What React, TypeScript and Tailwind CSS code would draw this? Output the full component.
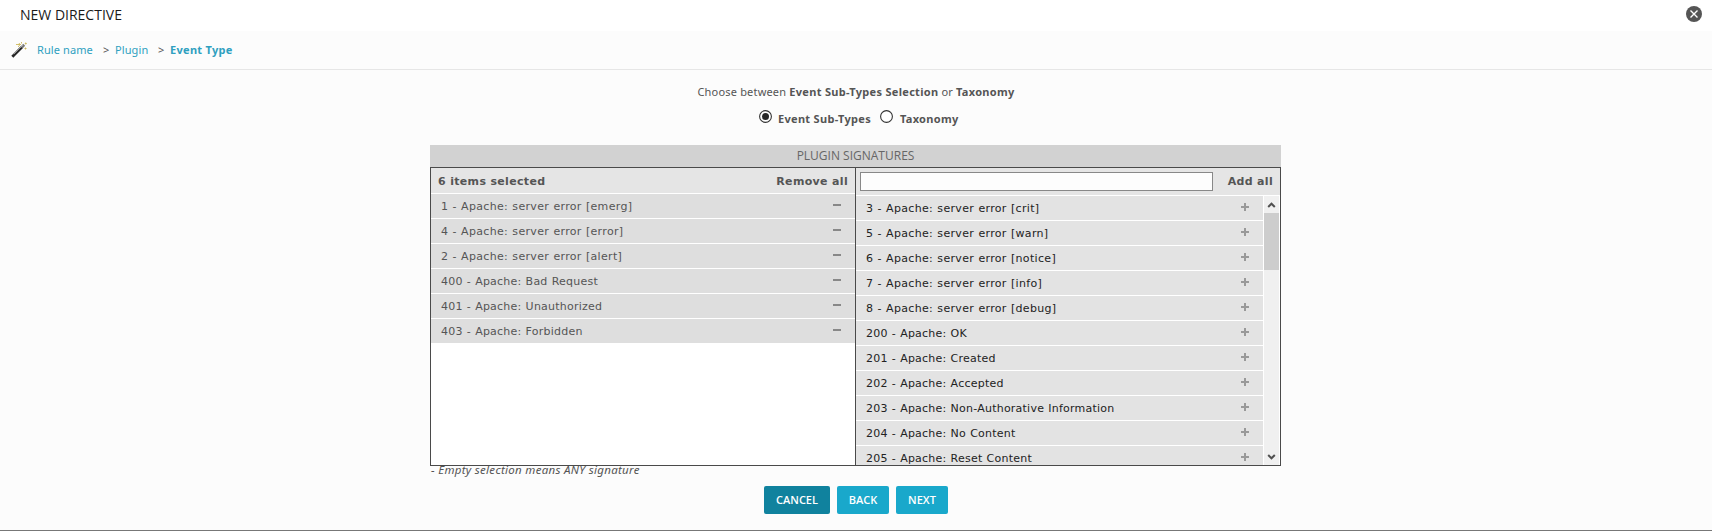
import React from 'react';

const selected = [
  '1 - Apache: server error [emerg]',
  '4 - Apache: server error [error]',
  '2 - Apache: server error [alert]',
  '400 - Apache: Bad Request',
  '401 - Apache: Unauthorized',
  '403 - Apache: Forbidden',
];

const available = [
  '3 - Apache: server error [crit]',
  '5 - Apache: server error [warn]',
  '6 - Apache: server error [notice]',
  '7 - Apache: server error [info]',
  '8 - Apache: server error [debug]',
  '200 - Apache: OK',
  '201 - Apache: Created',
  '202 - Apache: Accepted',
  '203 - Apache: Non-Authorative Information',
  '204 - Apache: No Content',
  '205 - Apache: Reset Content',
];

function Wand() {
  return (
    <svg width="16" height="16" viewBox="0 0 16 16" className="shrink-0">
      <path d="M1.300 14.700 L11 5" stroke="#262626" strokeWidth="2.800" />
      <path d="M10.600 5.400 L13.200 2.800" stroke="#777" strokeWidth="2.800" />
      <path d="M2.800 12.200 L12 3" stroke="#b5b5b5" strokeWidth="0.800" />
      <path d="M5 2.500h2.500M8.300 1v3M7 2.500h3M10.500 0v1.500M14.700 0.500v2M13.800 1.500h2M14.500 5.500v2M13.500 6.500h2M7 4.500h1" stroke="#cdb95c" strokeWidth="0.900" />
    </svg>
  );
}

function Radio({ checked }: { checked?: boolean }) {
  return (
    <svg width="13" height="13" viewBox="0 0 13 13" className="shrink-0">
      <circle cx="6.5" cy="6.5" r="5.9" fill="#fff" stroke="#333" strokeWidth="1.1" />
      {checked && <circle cx="6.5" cy="6.5" r="3.500" fill="#262626" />}
    </svg>
  );
}

function Label({ text }: { text: string }) {
  const spacing = text.includes('server error') ? 'tracking-[0.33px]' : 'tracking-[0.23px]';
  return <span className={`mt-[2px] whitespace-nowrap [word-spacing:0.4px] ${spacing}`}>{text}</span>;
}

export default function App() {
  return (
    <div className="flex h-[531px] w-[1712px] flex-col overflow-hidden border-b border-[#777] bg-[#fcfcfc] font-['Noto_Sans','Open_Sans',sans-serif] text-[11px] text-[#555]">
      <header className="flex h-[31px] shrink-0 items-start justify-between bg-white pl-5 pr-[10px]">
        <h1 className="mt-[5px] font-['Open_Sans',sans-serif] text-sm leading-5 text-[#1a1a1a]">NEW DIRECTIVE</h1>
        <svg width="16" height="16" viewBox="0 0 16 16" className="mt-[6px]">
          <circle cx="8" cy="8" r="8" fill="#555" />
          <path d="M4.500 4.500l7 7M11.500 4.500l-7 7" stroke="#fff" strokeWidth="1.4" />
        </svg>
      </header>

      <nav className="flex h-[39px] shrink-0 items-center border-b border-[#e6e6e6] pl-[11px] tracking-[0.1px] text-[#2fa0c0]">
        <Wand />
        <span className="ml-[10px] w-[66px]">Rule name</span>
        <span className="w-[12px] text-[#555]">&gt;</span>
        <span className="w-[43px]">Plugin</span>
        <span className="w-[12px] text-[#555]">&gt;</span>
        <b className="tracking-[0.3px]">Event Type</b>
      </nav>

      <p className="mt-3 h-5 text-center leading-5 tracking-[0.19px]">
        Choose between <b className="tracking-[0.3px]">Event Sub-Types Selection</b> or <b className="tracking-[0.3px]">Taxonomy</b>
      </p>
      <div className="mt-2 flex h-[18px] items-start pl-[759px] tracking-[0.3px]">
        <Radio checked />
        <b className="ml-[6px] mt-[1px] w-[102px] leading-4">Event Sub-Types</b>
        <Radio />
        <b className="ml-[7px] mt-[1px] leading-4">Taxonomy</b>
      </div>

      <div className="ml-[430px] mt-[17px] flex h-[22px] w-[851px] shrink-0 items-center justify-center bg-[#d2d2d2] font-['Open_Sans',sans-serif] text-xs text-[#666]">
        PLUGIN SIGNATURES
      </div>

      <section className="ml-[430px] flex h-[299px] w-[851px] shrink-0 border border-[#4a4a4a] font-['DejaVu_Sans',sans-serif]">
        <div className="flex w-[425px] shrink-0 flex-col border-r border-[#4a4a4a] bg-white">
          <div className="flex h-[26px] items-center justify-between border-b border-white bg-[#e5e5e5] px-[7px] pt-[3px] font-bold tracking-[0.33px]">
            <span>6 items selected</span>
            <span>Remove all</span>
          </div>
          {selected.map((s) => (
            <div key={s} className="flex h-[25px] items-center justify-between border-b border-white bg-[#dedede] pl-[10px] pr-[14px]">
              <Label text={s} />
              <i className="mb-[3px] h-[2px] w-2 bg-[#888]" />
            </div>
          ))}
        </div>
        <div className="flex min-w-0 flex-1 flex-col bg-white">
          <div className="flex h-[28px] shrink-0 items-center justify-between border-b border-white bg-[#e5e5e5] pl-1 pr-[7px] font-bold tracking-[0.33px]">
            <div className="mb-px h-[19px] w-[353px] border border-[#888] bg-[#fdfdfd]" />
            <span className="mt-px">Add all</span>
          </div>
          <div className="flex min-h-0 flex-1">
            <div className="w-[407px] overflow-hidden text-[#222]">
              {available.map((s) => (
                <div key={s} className="flex h-[25px] items-center justify-between border-b border-white bg-[#e3e3e3] pl-[10px] pr-[14px]">
                  <Label text={s} />
                  <svg width="8" height="8" viewBox="0 0 8 8" className="mb-[2px]">
                    <path d="M4 0v8M0 4h8" stroke="#999" strokeWidth="2" />
                  </svg>
                </div>
              ))}
            </div>
            <div className="ml-px flex w-[15px] flex-col items-center bg-[#f0f0f0]">
              <svg width="15" height="17" viewBox="0 0 15 17" className="shrink-0">
                <path d="M4.200 11 L7.500 7.700 L10.800 11" fill="none" stroke="#505050" strokeWidth="2" />
              </svg>
              <div className="h-[57px] w-full shrink-0 bg-[#cdcdcd]" />
              <svg width="15" height="17" viewBox="0 0 15 17" className="mt-auto shrink-0">
                <path d="M4.200 7 L7.500 10.300 L10.800 7" fill="none" stroke="#505050" strokeWidth="2" />
              </svg>
            </div>
          </div>
        </div>
      </section>

      <p className="ml-[431px] -mt-[3px] h-[23px] shrink-0 text-[11.5px] italic leading-[14px] tracking-[0.3px]">
        - Empty selection means ANY signature
      </p>

      <div className="flex gap-[7px] pl-[764px] font-['Open_Sans',sans-serif] text-[11px] font-semibold text-white">
        <button className="h-7 w-[66px] rounded-[2px] bg-[#10829e]">CANCEL</button>
        <button className="h-7 w-[52px] rounded-[2px] bg-[#19a8cb]">BACK</button>
        <button className="h-7 w-[52px] rounded-[2px] bg-[#19a8cb]">NEXT</button>
      </div>
    </div>
  );
}
